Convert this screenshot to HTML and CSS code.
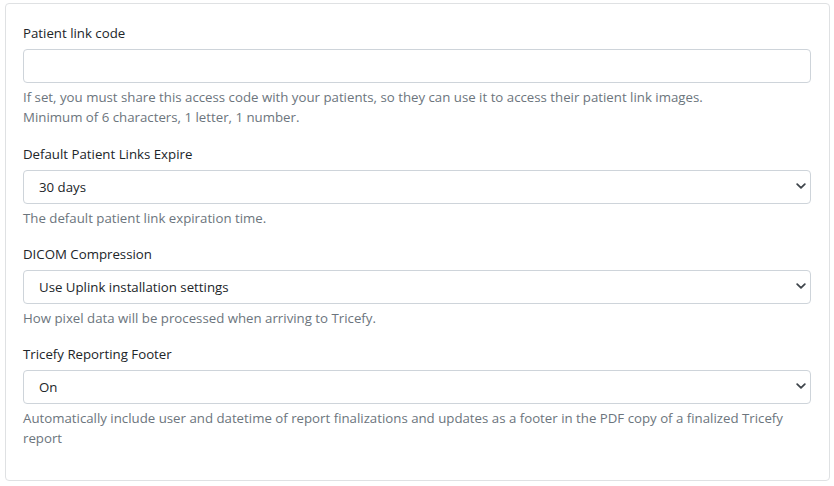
FILE: index.html
```html
<!DOCTYPE html>
<html>
<head>
<meta charset="utf-8">
<link rel="stylesheet" href="styles.css">
</head>
<body>
<div class="card">
  <div class="group first">
    <label class="label">Patient link code</label>
    <div class="control"></div>
    <div class="help">If set, you must share this access code with your patients, so they can use it to access their patient link images.<br>Minimum of 6 characters, 1 letter, 1 number.</div>
  </div>
  <div class="group">
    <label class="label">Default Patient Links Expire</label>
    <div class="control select"><span>30 days</span><svg class="chev" width="10" height="6" viewBox="0 0 10 6"><path d="M1.2 1.2L5 4.8L8.8 1.2" fill="none" stroke="#3f454b" stroke-width="1.8" stroke-linecap="round" stroke-linejoin="round"/></svg></div>
    <div class="help">The default patient link expiration time.</div>
  </div>
  <div class="group">
    <label class="label">DICOM Compression</label>
    <div class="control select"><span>Use Uplink installation settings</span><svg class="chev" width="10" height="6" viewBox="0 0 10 6"><path d="M1.2 1.2L5 4.8L8.8 1.2" fill="none" stroke="#3f454b" stroke-width="1.8" stroke-linecap="round" stroke-linejoin="round"/></svg></div>
    <div class="help">How pixel data will be processed when arriving to Tricefy.</div>
  </div>
  <div class="group">
    <label class="label">Tricefy Reporting Footer</label>
    <div class="control select"><span>On</span><svg class="chev" width="10" height="6" viewBox="0 0 10 6"><path d="M1.2 1.2L5 4.8L8.8 1.2" fill="none" stroke="#3f454b" stroke-width="1.8" stroke-linecap="round" stroke-linejoin="round"/></svg></div>
    <div class="help">Automatically include user and datetime of report finalizations and updates as a footer in the PDF copy of a finalized Tricefy report</div>
  </div>
</div>
</body>
</html>
```
FILE: styles.css
```css
html, body {
  margin: 0;
  padding: 0;
  background: #ffffff;
}
body {
  padding: 3px 4px 0 5px;
  font-family: "Open Sans", "Noto Sans", "DejaVu Sans", sans-serif;
  color: #212529;
}
.card {
  box-sizing: border-box;
  width: 825px;
  height: 478px;
  border: 1px solid #dfe1e3;
  border-radius: 4px;
  padding: 19px 18px 16px 17px;
}
.group {
  margin-bottom: 16px;
}
.group.first {
  margin-bottom: 17px;
}
.label {
  display: block;
  font-size: 13.25px;
  line-height: 20px;
  margin-bottom: 6px;
  color: #212529;
}
.control {
  box-sizing: border-box;
  height: 34px;
  border: 1px solid #ced4da;
  border-radius: 4px;
  background: #fff;
}
.select {
  display: flex;
  align-items: center;
  justify-content: space-between;
  padding: 0 4px 2px 15px;
  font-size: 13.25px;
  color: #212529;
}
.select span {
  padding-top: 2px;
}
.chev {
  display: block;
}
.help {
  margin-top: 4px;
  font-size: 13.25px;
  line-height: 20px;
  color: #6c757d;
}
```
